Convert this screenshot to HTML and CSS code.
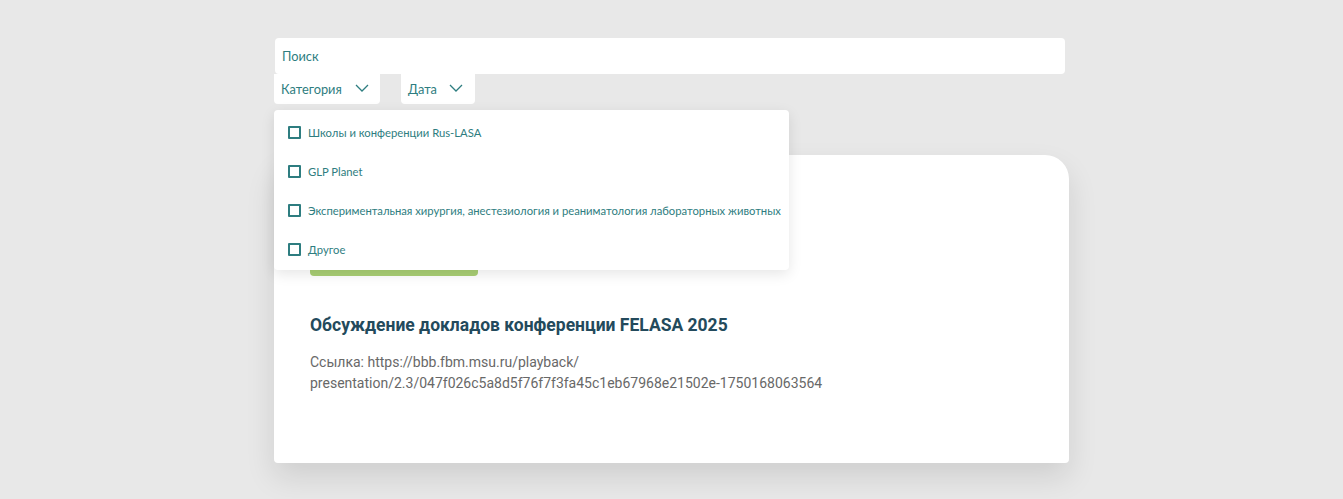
FILE: index.html
```html
<!DOCTYPE html>
<html lang="ru">
<head>
<meta charset="utf-8">
<link rel="stylesheet" href="styles.css">
</head>
<body>
<div class="page">
  <div class="search">Поиск</div>
  <div class="filters">
    <div class="filter">
      <button class="select sel-cat">Категория
        <svg class="chev" width="14" height="8" viewBox="0 0 14 8"><path d="M1 1l6 6 6-6" fill="none" stroke="currentColor" stroke-width="1.3"/></svg>
      </button>
      <div class="dropdown">
        <label class="opt"><span class="box"></span>Школы и конференции Rus-LASA</label>
        <label class="opt"><span class="box"></span>GLP Planet</label>
        <label class="opt"><span class="box"></span>Экспериментальная хирургия, анестезиология и реаниматология лабораторных животных</label>
        <label class="opt"><span class="box"></span>Другое</label>
      </div>
    </div>
    <div class="filter">
      <button class="select sel-date">Дата
        <svg class="chev" width="14" height="8" viewBox="0 0 14 8"><path d="M1 1l6 6 6-6" fill="none" stroke="currentColor" stroke-width="1.3"/></svg>
      </button>
    </div>
  </div>
  <div class="card">
    <div class="tag"></div>
    <h2 class="title">Обсуждение докладов конференции FELASA 2025</h2>
    <p class="link">Ссылка: https://bbb.fbm.msu.ru/playback/<br>presentation/2.3/047f026c5a8d5f76f7f3fa45c1eb67968e21502e-1750168063564</p>
  </div>
</div>
</body>
</html>
```
FILE: styles.css
```css
* { box-sizing: border-box; }
html, body { margin: 0; padding: 0; }
body {
  background: #e8e8e8;
  font-family: Lato, "Open Sans", sans-serif;
  color: #2e7d80;
  height: 499px;
  overflow: hidden;
}
.page {
  width: 795px;
  margin: 0 auto;
  padding-top: 38px;
}
.search {
  width: 790px;
  height: 36px;
  margin-left: 1px;
  background: #fff;
  border-radius: 4px;
  padding: 0 7px;
  display: flex;
  align-items: center;
  font-size: 12.8px;
  color: #2e7d80;
}
.filters {
  display: flex;
  gap: 21px;
}
.filter { position: relative; }
.select {
  height: 30px;
  background: #fff;
  border: 0;
  border-radius: 0 0 4px 4px;
  padding: 0 13px 0 7px;
  display: flex;
  align-items: center;
  font-family: inherit;
  font-size: 12.8px;
  color: #2e7d80;
}
.sel-cat { width: 106px; gap: 13px; }
.sel-date { width: 74px; gap: 12px; }
.chev { color: #2e7d80; margin-top: -2px; flex: none; }
.dropdown {
  position: absolute;
  top: 36px;
  left: 0;
  width: 515px;
  background: #fff;
  border-radius: 4px;
  box-shadow: 0 4px 14px rgba(0,0,0,0.10);
  padding: 3px 0 1px 0;
  z-index: 5;
}
.opt {
  display: flex;
  align-items: center;
  height: 39px;
  padding-left: 14px;
  font-size: 11.25px;
  color: #2e7d80;
  white-space: nowrap;
}
.box {
  width: 13px;
  height: 13px;
  border: 2px solid #2e7d80;
  border-radius: 1px;
  margin-right: 7px;
  flex: none;
}
.card {
  margin-top: 51px;
  width: 795px;
  background: #fff;
  border-radius: 24px 24px 4px 4px;
  box-shadow: 0 14px 30px rgba(0,0,0,0.11);
  padding: 81px 36px 69px 36px;
}
.tag {
  width: 168px;
  height: 40px;
  background: #a9cf74;
  border-radius: 4px;
}
.title {
  margin: 37px 0 0 0;
  font-family: Roboto, sans-serif;
  font-weight: 700;
  font-size: 17.5px;
  line-height: 24px;
  color: #234a5c;
}
.link {
  margin: 15px 0 0 0;
  font-family: Roboto, sans-serif;
  font-size: 14px;
  line-height: 21px;
  color: #686868;
}
```
